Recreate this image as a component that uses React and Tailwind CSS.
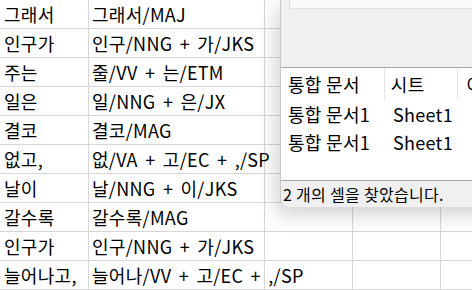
import React from 'react';

const rows = [
  ['그래서', '그래서/MAJ'],
  ['인구가', '인구/NNG + 가/JKS'],
  ['주는', '줄/VV + 는/ETM'],
  ['일은', '일/NNG + 은/JX'],
  ['결코', '결코/MAG'],
  ['없고,', '없/VA + 고/EC + ,/SP'],
  ['날이', '날/NNG + 이/JKS'],
  ['갈수록', '갈수록/MAG'],
  ['인구가', '인구/NNG + 가/JKS'],
  ['늘어나고,', '늘어나/VV + 고/EC + ,/SP'],
];

const found = [
  ['통합 문서1', 'Sheet1'],
  ['통합 문서1', 'Sheet1'],
];

const font = { fontFamily: '"Noto Sans CJK KR", "Noto Sans", sans-serif' };

export default function App() {
  return (
    <div className="relative w-[472px] h-[290px] overflow-hidden bg-white text-black" style={font}>
      {/* 시트 격자 */}
      <div className="flex flex-col">
        {rows.map(([word, tag], i) => (
          <div key={i} className="flex h-[29px] border-b border-[#d6d6d6] text-[18px] leading-[28px] tracking-[0.3px] [word-spacing:3px]">
            <div className="w-[89px] shrink-0 border-r border-[#d6d6d6] pl-[4px] whitespace-nowrap overflow-hidden">{word}</div>
            <div className="w-[176px] shrink-0 border-r border-[#d6d6d6] pl-[3px] whitespace-nowrap overflow-visible">{tag}</div>
            <div className="w-[88px] shrink-0 border-r border-[#d6d6d6]"></div>
            <div className="w-[88px] shrink-0 border-r border-[#d6d6d6]"></div>
            <div className="flex-1"></div>
          </div>
        ))}
      </div>

      {/* 찾기 결과 창 */}
      <div className="absolute left-[280px] top-0 w-[220px] h-[207px] flex flex-col bg-[#f0f0f0] rounded-bl-lg border-l border-[#c8c8c8] shadow-[-4px_8px_20px_rgba(0,0,0,0.18)]">
        <div className="h-[67px] shrink-0 pl-[8px]">
          <div className="h-[9px] bg-[#f9f9f9] border-b border-l border-[#e0e0e0]"></div>
        </div>
        <div className="flex-1 bg-white border-t border-b border-[#a8a8a8] text-[18px] tracking-[0.3px]">
          <div className="flex h-[32px] items-center">
            <div className="w-[106px] h-full border-r border-[#e5e5e5] pl-[7px] leading-[32px] whitespace-nowrap">통합 문서</div>
            <div className="w-[75px] h-full border-r border-[#e5e5e5] pl-[6px] leading-[32px] whitespace-nowrap">시트</div>
            <div className="flex-1 h-full pl-[8px] leading-[32px] whitespace-nowrap">이름</div>
          </div>
          {found.map(([book, sheet], i) => (
            <div key={i} className="flex h-[28px] items-center leading-[28px]">
              <div className="w-[107px] pl-[7px] whitespace-nowrap">{book}</div>
              <div className="w-[75px] pl-[5px] whitespace-nowrap">{sheet}</div>
            </div>
          ))}
        </div>
        <div className="h-[26px] shrink-0 pl-[2px] text-[16px] leading-[26px] tracking-[0.3px] whitespace-nowrap">2 개의 셀을 찾았습니다.</div>
      </div>
    </div>
  );
}
